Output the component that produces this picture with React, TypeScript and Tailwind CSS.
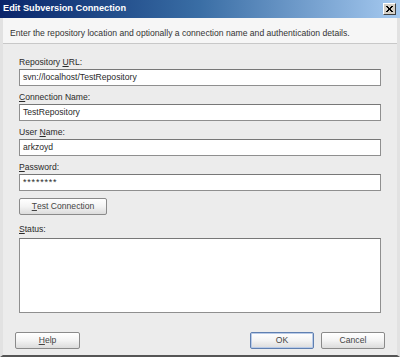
import React from "react";

const font = { fontFamily: '"Liberation Sans", Arial, sans-serif' };

function Mn({ children }: { children: React.ReactNode }) {
  return <span className="underline underline-offset-1">{children}</span>;
}

function Field({
  label,
  value,
  secret,
}: {
  label: React.ReactNode;
  value: string;
  secret?: boolean;
}) {
  return (
    <div className="flex flex-col">
      <div className="h-[13px] leading-[13px]">{label}</div>
      <div
        className={`h-[17px] border border-[#8f8f8f] border-t-[#777] bg-white px-[3px] leading-[15px] text-[#2a2a2a] ${
          secret ? "text-[9px] tracking-[0.8px]" : ""
        }`}
      >
        {value}
      </div>
    </div>
  );
}

function Btn({
  children,
  w,
  primary,
}: {
  children: React.ReactNode;
  w: string;
  primary?: boolean;
}) {
  return (
    <div
      className={`${w} h-[17px] flex items-center justify-center rounded-[2px] border bg-gradient-to-b from-white via-[#f3f3f3] to-[#dcdcdc] text-[#444] ${
        primary ? "border-[#5f7fb0] shadow-[inset_0_0_0_1px_#b9cbe8]" : "border-[#8a8a8a]"
      }`}
    >
      {children}
    </div>
  );
}

export default function App() {
  return (
    <div
      className="w-[400px] h-[357px] overflow-hidden flex flex-col bg-[#ececec] text-[8.6px] text-[#2a2a2a]"
      style={font}
    >
      <div className="h-[18px] shrink-0 flex items-center justify-between bg-gradient-to-r from-[#0a246a] via-[#3a6ea5] to-[#a6caf0] pl-[3px] pr-[4px]">
        <span className="font-bold text-white text-[9.2px]">Edit Subversion Connection</span>
        <div className="w-[13px] h-[12px] flex items-center justify-center bg-[#d4d0c8] border border-t-white border-l-white border-r-[#404040] border-b-[#404040]">
          <svg width="7" height="6" viewBox="0 0 7 6">
            <path d="M0 0 L6 6 M1 0 L7 6 M6 0 L0 6 M7 0 L1 6" stroke="#000" strokeWidth="1" />
          </svg>
        </div>
      </div>
      <div className="flex-1 flex flex-col border-x-[3px] border-b-[2px] border-x-[#e2e2e2] border-b-[#555]">
        <div className="h-[26px] shrink-0 bg-[#f6f6f6] border-b border-[#c8c8c8] pl-[7px] pt-[9px] leading-[13px] text-[#333]">
          Enter the repository location and optionally a connection name and authentication details.
        </div>
        <div className="flex-1 flex flex-col px-[16px] pt-[12px]">
          <div className="flex flex-col gap-[5px]">
            <Field label={<>Repository <Mn>U</Mn>RL:</>} value="svn://localhost/TestRepository" />
            <Field label={<><Mn>C</Mn>onnection Name:</>} value="TestRepository" />
            <Field label={<>User <Mn>N</Mn>ame:</>} value="arkzoyd" />
            <Field label={<><Mn>P</Mn>assword:</>} value="********" secret />
          </div>
          <div className="mt-[7px]">
            <Btn w="w-[88px]">
              <Mn>T</Mn>est Connection
            </Btn>
          </div>
          <div className="mt-[8px] h-[13px] leading-[13px]">
            <Mn>S</Mn>tatus:
          </div>
          <div className="mt-[2px] h-[75px] border border-[#8f8f8f] border-t-[#777] bg-white" />
          <div className="mt-[19px] -mx-[4px] flex items-center">
            <Btn w="w-[65px]">
              <Mn>H</Mn>elp
            </Btn>
            <div className="flex-1" />
            <Btn w="w-[64px]" primary>
              OK
            </Btn>
            <div className="w-[7px]" />
            <Btn w="w-[64px]">Cancel</Btn>
          </div>
        </div>
      </div>
    </div>
  );
}
